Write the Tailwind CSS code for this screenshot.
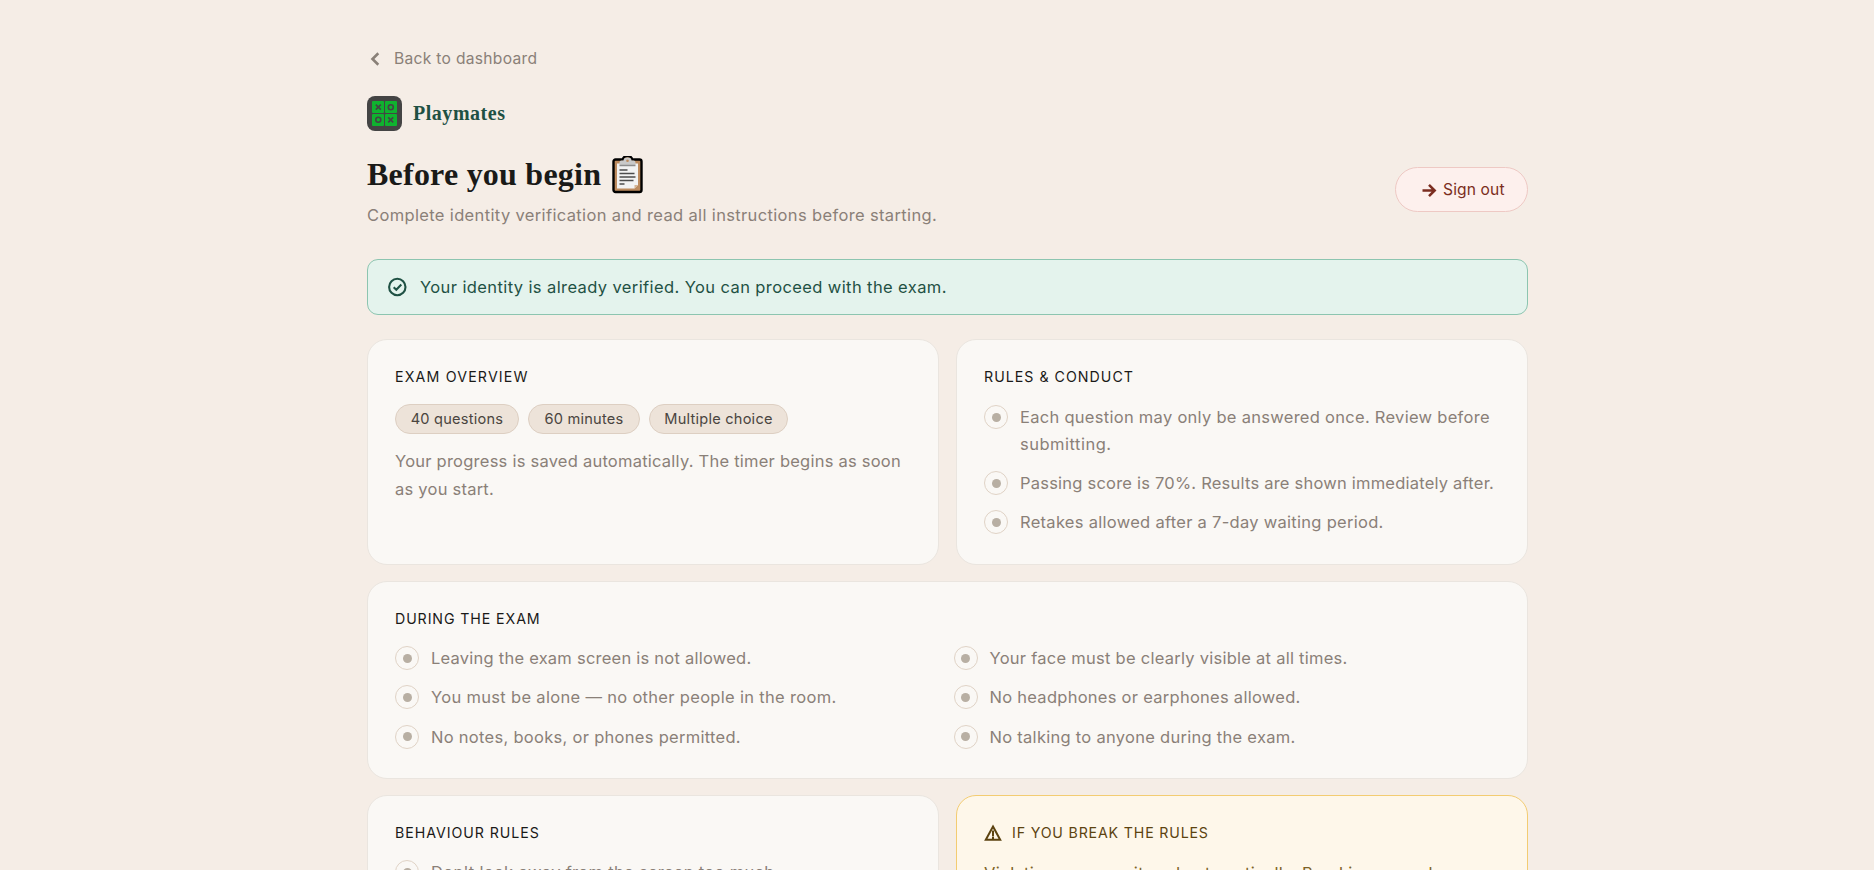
<!DOCTYPE html>
<html lang="en">
<head>
    <meta charset="UTF-8">
    <meta name="viewport" content="width=device-width, initial-scale=1.0">
    <title>Playmates - Before you begin</title>
    <script src="https://cdn.jsdelivr.net/npm/@tailwindcss/browser@4"></script>
</head>
<body class="h-screen overflow-hidden bg-[#f5ede6] font-['Inter',sans-serif] text-[16.5px] text-[#8a8078]">
    <div class="flex h-full justify-center overflow-hidden pl-[21px] pt-[46px]">
        <main class="w-[1161px] shrink-0">

            <a class="flex h-[26px] items-center text-[15.6px] tracking-[0.3px]">
                <svg class="mr-[9px] h-[18px] w-[18px]" viewBox="0 0 18 18" fill="none" stroke="currentColor" stroke-width="2.6"><path d="M11.300 3.300 5.500 9l5.800 5.700"/></svg>
                Back to dashboard
            </a>

            <!-- Brand -->
            <div class="mt-6 flex h-[35px] items-center">
                <svg class="h-[35px] w-[35px]" viewBox="0 0 35 35" fill="none">
                    <rect width="35" height="35" rx="8" fill="#444"/>
                    <rect x="5" y="5" width="12" height="12" rx="1" fill="#0fb32f"/>
                    <rect x="18" y="5" width="12" height="12" rx="1" fill="#0fb32f"/>
                    <rect x="5" y="18" width="12" height="12" rx="1" fill="#0fb32f"/>
                    <rect x="18" y="18" width="12" height="12" rx="1" fill="#0fb32f"/>
                    <g stroke="#444" stroke-width="1.6">
                        <path d="m8.800 8.600 5 5m0-5-5 5M21.200 21.400l5 5m0-5-5 5"/>
                        <circle cx="23.800" cy="11.200" r="2.500"/>
                        <circle cx="11.300" cy="23.800" r="2.500"/>
                    </g>
                </svg>
                <span class="mb-[2px] ml-[11px] font-['Liberation_Serif',serif] text-[20px] font-bold leading-6 tracking-[0.53px] text-[#1f5144]">Playmates</span>
            </div>

            <header class="mt-6 flex items-center justify-between">
                <div>
                    <h1 class="flex h-[38px] items-center font-['Liberation_Serif',serif] text-[32px] font-bold leading-[38px] tracking-[0.23px] text-[#1a1a18]">
                        Before you begin
                        <svg class="ml-[11px] mt-px h-[38px] w-[31px]" viewBox="0 0 31 38">
                            <path d="M3.500 3.500H11a4.500 3.500 0 0 1 9 0h7.500a2 2 0 0 1 2 2V34a2 2 0 0 1-2 2h-24a2 2 0 0 1-2-2V5.500a2 2 0 0 1 2-2Z" fill="#bd8b5e" stroke="#000" stroke-width="2.400"/>
                            <path d="M5 7.500h21V29l-3.500 3.500H5z" fill="#f2f2f2"/>
                            <path d="M22.500 32.500 26 29h-3.500z" fill="#d3b494"/>
                            <path d="M7.500 9V6.500a2 2 0 0 1 2-2h2a4 3 0 0 1 8 0h2a2 2 0 0 1 2 2V9z" fill="#c9c9c9"/>
                            <circle cx="15.500" cy="4.800" r="1.300" fill="#bd8b5e"/>
                            <path d="M7.500 9.500h16" stroke="#8d8d8d" stroke-width="1.500"/>
                            <path d="M7.500 14h8M7.500 17.500h15M7.500 21h16M7.500 24.500h14M7.500 28h5" stroke="#4c4c4c" stroke-width="1.300"/>
                        </svg>
                    </h1>
                    <p class="mt-2 leading-7 tracking-[0.355px]">Complete identity verification and read all instructions before starting.</p>
                </div>
                <button class="mt-[-5px] flex h-[45px] w-[133px] items-center rounded-full border border-[#eec9c4] bg-[#fdf0ed] pl-[25px] text-[15.6px] tracking-[0.13px] text-[#7b2d20]">
                    <svg class="mr-[6px] h-4 w-4" viewBox="0 0 16 16" fill="none" stroke="currentColor" stroke-width="2.500"><path d="M1.500 8.500h12M8 2.800l5.700 5.700L8 14.200"/></svg>
                    Sign out
                </button>
            </header>

            <!-- Verification status -->
            <div class="mt-[30px] flex h-14 items-center rounded-[11px] border border-[#8cc5b0] bg-[#e4f3ed] pl-5 text-[#1f5144]">
                <svg class="mr-[12px] h-5 w-5" viewBox="0 0 20 20" fill="none" stroke="currentColor" stroke-width="2.100"><circle cx="9.300" cy="10" r="8.200"/><path d="m5.700 10.200 2.600 2.600 5-5.200"/></svg>
                <span class="tracking-[0.395px]">Your identity is already verified. You can proceed with the exam.</span>
            </div>

            <div class="mt-6 grid grid-cols-2 gap-x-[17px] gap-y-4">

                <!-- Exam overview -->
                <section class="h-[226px] rounded-[20px] border border-[#eae5df] bg-[#faf8f5] p-[27px]">
                    <h2 class="text-[14.2px] leading-5 tracking-[1.17px] text-[#1a1a18]">EXAM OVERVIEW</h2>
                    <div class="mt-[17px] flex gap-[9px] text-[14.6px] tracking-[0.22px] text-[#4a4540]">
                        <span class="flex h-[30px] w-[124px] items-center justify-center rounded-full border border-[#ddcfc2] bg-[#ede3d9] pt-px">40 questions</span>
                        <span class="flex h-[30px] w-[112px] items-center justify-center rounded-full border border-[#ddcfc2] bg-[#ede3d9] pt-px">60 minutes</span>
                        <span class="flex h-[30px] w-[139px] items-center justify-center rounded-full border border-[#ddcfc2] bg-[#ede3d9] pt-px">Multiple choice</span>
                    </div>
                    <p class="mt-[13px] leading-7 tracking-[0.235px]">Your progress is saved automatically. The timer begins as soon<br>as you start.</p>
                </section>

                <!-- Rules -->
                <section class="h-[226px] rounded-[20px] border border-[#eae5df] bg-[#faf8f5] p-[27px]">
                    <h2 class="text-[14.2px] leading-5 tracking-[1.02px] text-[#1a1a18]">RULES &amp; CONDUCT</h2>
                    <ul class="mt-[17px] flex flex-col gap-3 whitespace-nowrap leading-[27px]">
                        <li class="flex gap-3">
                            <span class="mt-px flex h-6 w-6 shrink-0 items-center justify-center rounded-full border border-[#e0d3c6]"><i class="h-[9px] w-[9px] rounded-full bg-[#b8afa3]"></i></span>
                            <span class="tracking-[0.285px]">Each question may only be answered once. Review before<br><span class="tracking-[0.5px]">submitting.</span></span>
                        </li>
                        <li class="flex gap-3">
                            <span class="mt-px flex h-6 w-6 shrink-0 items-center justify-center rounded-full border border-[#e0d3c6]"><i class="h-[9px] w-[9px] rounded-full bg-[#b8afa3]"></i></span>
                            <span class="tracking-[0.217px]">Passing score is 70%. Results are shown immediately after.</span>
                        </li>
                        <li class="flex gap-3">
                            <span class="mt-px flex h-6 w-6 shrink-0 items-center justify-center rounded-full border border-[#e0d3c6]"><i class="h-[9px] w-[9px] rounded-full bg-[#b8afa3]"></i></span>
                            <span class="tracking-[0.285px]">Retakes allowed after a 7-day waiting period.</span>
                        </li>
                    </ul>
                </section>

                <!-- During the exam -->
                <section class="col-span-2 h-[198px] rounded-[20px] border border-[#eae5df] bg-[#faf8f5] p-[27px]">
                    <h2 class="text-[14.2px] leading-5 tracking-[0.9px] text-[#1a1a18]">DURING THE EXAM</h2>
                    <ul class="mt-4 grid grid-cols-2 gap-x-3 gap-y-[12.4px] leading-[27px]">
                        <li class="flex gap-3">
                            <span class="mt-px flex h-6 w-6 shrink-0 items-center justify-center rounded-full border border-[#e0d3c6]"><i class="h-[9px] w-[9px] rounded-full bg-[#b8afa3]"></i></span>
                            <span class="tracking-[0.235px]">Leaving the exam screen is not allowed.</span>
                        </li>
                        <li class="flex gap-3">
                            <span class="mt-px flex h-6 w-6 shrink-0 items-center justify-center rounded-full border border-[#e0d3c6]"><i class="h-[9px] w-[9px] rounded-full bg-[#b8afa3]"></i></span>
                            <span class="tracking-[0.258px]">Your face must be clearly visible at all times.</span>
                        </li>
                        <li class="flex gap-3">
                            <span class="mt-px flex h-6 w-6 shrink-0 items-center justify-center rounded-full border border-[#e0d3c6]"><i class="h-[9px] w-[9px] rounded-full bg-[#b8afa3]"></i></span>
                            <span class="tracking-[0.315px]">You must be alone — no other people in the room.</span>
                        </li>
                        <li class="flex gap-3">
                            <span class="mt-px flex h-6 w-6 shrink-0 items-center justify-center rounded-full border border-[#e0d3c6]"><i class="h-[9px] w-[9px] rounded-full bg-[#b8afa3]"></i></span>
                            <span class="tracking-[0.27px]">No headphones or earphones allowed.</span>
                        </li>
                        <li class="flex gap-3">
                            <span class="mt-px flex h-6 w-6 shrink-0 items-center justify-center rounded-full border border-[#e0d3c6]"><i class="h-[9px] w-[9px] rounded-full bg-[#b8afa3]"></i></span>
                            <span class="tracking-[0.29px]">No notes, books, or phones permitted.</span>
                        </li>
                        <li class="flex gap-3">
                            <span class="mt-px flex h-6 w-6 shrink-0 items-center justify-center rounded-full border border-[#e0d3c6]"><i class="h-[9px] w-[9px] rounded-full bg-[#b8afa3]"></i></span>
                            <span class="tracking-[0.28px]">No talking to anyone during the exam.</span>
                        </li>
                    </ul>
                </section>

                <!-- Behaviour rules -->
                <section class="h-[198px] rounded-[20px] border border-[#eae5df] bg-[#faf8f5] p-[27px]">
                    <h2 class="text-[14.2px] leading-5 tracking-[0.94px] text-[#1a1a18]">BEHAVIOUR RULES</h2>
                    <ul class="mt-4 flex flex-col gap-3 leading-[27px]">
                        <li class="flex gap-3">
                            <span class="mt-px flex h-6 w-6 shrink-0 items-center justify-center rounded-full border border-[#e0d3c6]"><i class="h-[9px] w-[9px] rounded-full bg-[#b8afa3]"></i></span>
                            <span class="tracking-[0.31px]">Don't look away from the screen too much.</span>
                        </li>
                    </ul>
                </section>

                <!-- Violations -->
                <section class="h-[198px] rounded-[20px] border border-[#f3cc72] bg-[#fef7ea] p-[27px] text-[#5c4310]">
                    <h2 class="flex items-center text-[14.2px] leading-5 tracking-[0.83px]">
                        <svg class="mr-[10px] h-[18px] w-[18px]" viewBox="0 0 18 18" fill="none" stroke="currentColor" stroke-width="2"><path d="M9 2.500 16.200 15.800H1.800z"/><path d="M9 6.500v5.500M9 12.500v2.700"/></svg>
                        IF YOU BREAK THE RULES
                    </h2>
                    <p class="mt-4 leading-7 tracking-[0.298px] text-[#7d6226]">Violations are monitored automatically. Breaking any rule</p>
                </section>
            </div>
        </main>
    </div>
</body>
</html>
